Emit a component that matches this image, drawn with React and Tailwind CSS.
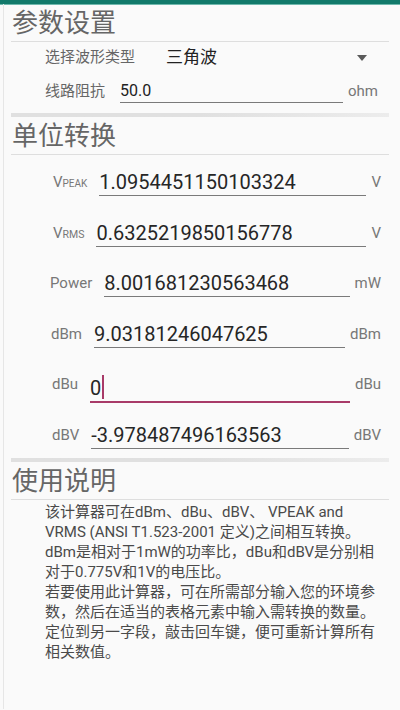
import React from "react";

const FONT = { fontFamily: "Roboto, 'Noto Sans CJK SC', sans-serif" };

function Header({ children }) {
  return (
    <div className="ml-[7px] mr-[11px] h-[38px] border-b border-[#dedede] pl-[1px] pt-[4px] text-[26px] leading-[30px] text-[#666666]">
      {children}
    </div>
  );
}

function Separator() {
  return <div className="ml-[7px] mr-[11px] h-[4px] bg-gradient-to-r from-[#e0e0e0] via-[#e0e0e0] to-[#ececec]" />;
}

function Row({ label, labelMl, value, unit, focused }) {
  return (
    <div className="flex h-[50.5px] items-start pr-[19px] pt-[14px]">
      <div className={`${labelMl} mr-[12px] whitespace-nowrap text-[15px] leading-[26px] text-[#777777]`}>{label}</div>
      <div
        className={`relative flex-1 whitespace-nowrap text-[20px] leading-[26px] text-[#262626] ${
          focused ? "border-b-2 border-[#a83a68]" : "border-b border-[#7a7a7a]"
        }`}
      >
        {value}
        {focused && <span className="ml-[1px] inline-block h-[24px] w-[2px] translate-y-[4px] bg-[#a83a68] align-baseline" />}
      </div>
      <div className="ml-[5px] whitespace-nowrap text-[15px] leading-[26px] text-[#777777]">{unit}</div>
    </div>
  );
}

export default function App() {
  return (
    <div className="min-h-[710px] w-[400px] bg-[#fafafa]" style={FONT}>
      <div className="h-[4px] bg-[#127a6b]" />
      <div className="h-[1px] bg-[#6fb8ad]" />
      <div className="-mt-[1px] ml-[3px] min-h-[705px] border-l border-[#e6e6e6]">
        <Header>参数设置</Header>
        <div className="flex h-[31px] items-center pr-[33px]">
          <div className="ml-[41px] text-[15px] text-[#666666]">选择波形类型</div>
          <div className="ml-[31px] flex-1 text-[17px] text-[#222222]">三角波</div>
          <svg width="10" height="6" viewBox="0 0 10 6">
            <polygon points="0,0 10,0 5,6" fill="#5a5a5a" />
          </svg>
        </div>
        <div className="flex h-[40px] items-start pr-[22px] pt-[7px]">
          <div className="ml-[41px] text-[15px] leading-[22px] text-[#666666]">线路阻抗</div>
          <div className="ml-[15px] flex-1 border-b border-[#7a7a7a] text-[16px] leading-[22px] text-[#222222]">50.0</div>
          <div className="ml-[5px] text-[15px] leading-[22px] text-[#777777]">ohm</div>
        </div>
        <Separator />
        <Header>单位转换</Header>
        <Row
          label={<span>V<span className="text-[10px]">PEAK</span></span>}
          labelMl="ml-[49px]"
          value="1.0954451150103324"
          unit="V"
        />
        <Row
          label={<span>V<span className="text-[10.5px]">RMS</span></span>}
          labelMl="ml-[49px]"
          value="0.6325219850156778"
          unit="V"
        />
        <Row label="Power" labelMl="ml-[46px]" value="8.001681230563468" unit="mW" />
        <Row label="dBm" labelMl="ml-[47px]" value="9.03181246047625" unit="dBm" />
        <Row label="dBu" labelMl="ml-[48px]" value="0" unit="dBu" focused />
        <Row label="dBV" labelMl="ml-[48px]" value="-3.978487496163563" unit="dBV" />
        <Separator />
        <Header>使用说明</Header>
        <div className="whitespace-nowrap pl-[41px] pt-[2px] text-[15px] leading-[20px] text-[#4a4a4a]">
          该计算器可在dBm、dBu、dBV、 VPEAK and
          <br />
          VRMS (ANSI T1.523-2001 定义)之间相互转换。
          <br />
          dBm是相对于1mW的功率比，dBu和dBV是分别相
          <br />
          对于0.775V和1V的电压比。
          <br />
          若要使用此计算器，可在所需部分输入您的环境参
          <br />
          数，然后在适当的表格元素中输入需转换的数量。
          <br />
          定位到另一字段，敲击回车键，便可重新计算所有
          <br />
          相关数值。
        </div>
      </div>
    </div>
  );
}
